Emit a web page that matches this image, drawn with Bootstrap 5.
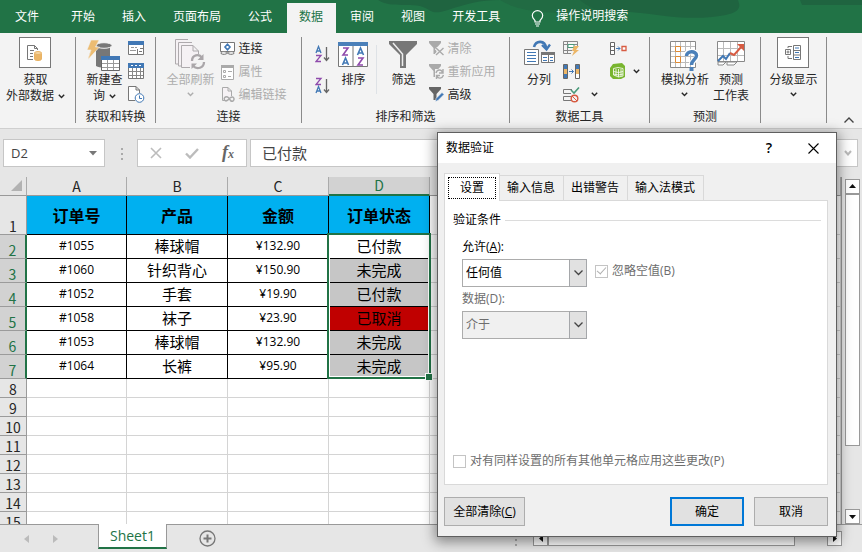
<!DOCTYPE html>
<html lang="zh-CN">
<head>
<meta charset="utf-8">
<meta name="viewport" content="width=device-width, initial-scale=1">
<title>数据验证</title>
<link rel="stylesheet" href="https://cdn.jsdelivr.net/npm/bootstrap@5.3.0/dist/css/bootstrap.min.css">
<style>
:root{--green:#217346;--ui:#e6e6e6;--line:#d4d4d4}
body{font:12px/16px "Open Sans","Noto Sans CJK SC",sans-serif;color:#262626;background:var(--ui)}
button{font:inherit;color:inherit;border:0;background:none;padding:0}
svg{display:block;flex:none}
.top-tabs{background:var(--green);height:34px;padding-left:3px;gap:2px}
.top-art{inset:0;width:100%;height:100%}
.top-tabs a{color:#fff;text-decoration:none;line-height:28px;padding:0 13px 0 12px;white-space:nowrap;height:30px}
.top-tabs a.file-tab{margin-right:5px}
.top-tabs a.on{background:#f3f3f3;color:var(--green)}
.top-tabs .tell{margin-left:16px;color:#fff;gap:12px;height:30px}
.ribbon{background:#f3f3f3;border-bottom:1px solid #cfcfcf;padding:4px 0 5px;height:96px}
.rgroup{border-right:1px solid #8a8a8a;white-space:nowrap}
.rgroup .body-row{height:73px;justify-content:center}
.cap{text-align:center;line-height:14px}
.big{display:flex;flex-direction:column;align-items:center}
.big .pic{height:35px;padding-top:2px;display:flex;align-items:flex-start}
.frame{width:32px;height:31px;border:1px solid #777;background:#fff;display:flex;align-items:center;justify-content:center;margin-top:-2px}
.off{color:#adadad}
.stack{display:flex;flex-direction:column}
.stack button{height:23px;display:flex;align-items:center;gap:3px}
.g1{width:76px}.g2{width:80px}.g3{width:146px}.g4{width:208px}.g5{width:140px}.g6{width:111px}.g7{width:66px}
.g2 .body-row,.g3 .body-row{gap:5px}
.fbar{height:48px;padding:10px 4px 0 3px}
.fbox{background:#fff;border:1px solid #c6c6c6;height:28px}
.fbox input{border:0;outline:0;background:none;color:#444;width:100%;min-width:0;padding:0}
.name-box{width:102px;padding:0 7px}
.name-box input{font-size:13px}
.tools{width:110px;margin-left:14px;padding:0 12px}
.fx{font:italic bold 18px/18px "Liberation Serif",serif;color:#666}
.fx small{font-size:12px}
.formula{margin-left:3px;padding:0 5px 0 11px}
.formula input{font-size:15px}
.dots{gap:3px;margin-top:9px}
.dots i{width:2px;height:2px;background:#aaa}
.work{min-height:0;overflow:hidden}
.sheet-wrap{overflow:hidden;min-width:0}
.grid{table-layout:fixed;width:100%;border-collapse:separate;border-spacing:0;background:#fff;border-right:1px solid #999}
.grid th,.grid td{padding:0;text-align:center;border-right:1px solid var(--line);border-bottom:1px solid var(--line)}
.grid th{background:var(--ui);font:14px/16px "Noto Sans CJK SC",sans-serif;color:#262626;border-color:#9b9b9b}
.grid thead th{height:19px;border-color:#ababab #ababab #999 #ababab}
.grid tbody th{vertical-align:bottom;height:19px}
.grid thead th.sel{background:#d2d2d2;color:var(--green);border-bottom:2px solid var(--green);line-height:15px}
.grid .tr-head th,.grid .tr-head td{height:39px}
.grid .tr-data th,.grid .tr-data td{height:24px}
.grid .tr-head td.hd{background:#00b0f0;color:#000;font:bold 16px/20px "Noto Sans CJK SC",sans-serif;border-color:#000}
.grid .tr-data td.c{border-color:#000;color:#000}
.grid .tr-data td.zh{font-size:15px;line-height:20px}
.grid .tr-data th{background:#d2d2d2;color:var(--green);border-right:2px solid var(--green)}
.grid .tr-data td.s{background:#c6c6c6}
.grid .tr-data td.bad{background:#c00000}
.pick{left:-2px;top:-2px;width:calc(100% + 4px);height:calc(600% + 8px);border:2px solid var(--green);box-shadow:inset 0 0 0 1px #fff;pointer-events:none}
.pick::after{content:"";position:absolute;right:-4px;bottom:-4px;width:6px;height:6px;background:var(--green);border:1px solid #fff;box-sizing:content-box}
.vbar{width:15px;margin:2px 2px 0 3px}
.vbar button,.hbar button{width:15px;height:15px;background:#fff;border:1px solid #999;display:flex;align-items:center;justify-content:center;flex:none}
.vthumb{height:252px;border:1px solid #999;background:#fff}
.foot{height:28px;border-top:1px solid #999;padding-right:20px}
.pager{padding:0 40px 0 24px}
.sheet-tab{background:#fff;color:var(--green);border:1px solid #999;border-top:0;border-bottom:2px solid var(--green);width:69px;height:25px;margin-top:-1px;font-size:14px;text-align:center;line-height:24px;text-decoration:none}
.hbar{width:309px;margin-top:6px}
.hthumb{width:247px;height:15px;border:1px solid #999;background:#fff}
.dlg{left:437px;top:132px;width:400px;border:1px solid #5f5f5f;background:#f0f0f0;color:#000;box-shadow:0 3px 12px 2px rgba(0,0,0,.42)}
.dlg-title{height:30px;background:#fff;padding:0 17px 0 8px}
.dlg-title h1{font-size:12px;line-height:16px;font-weight:400;margin:0}
.help{font-size:14px}
.dlg-main{padding:10px 8px 10px 6px}
.dtabs button{border:1px solid #d9d9d9;border-left:0;border-bottom:0;height:25px;background:#f0f0f0;padding:0 8px 0 7px}
.dtabs button.cur{height:28px;width:56px;background:#fff;border-left:1px solid #d9d9d9;padding:3px 3px 4px;margin-bottom:-1px;position:relative}
.dtabs .cur span{display:block;border:1px dotted #000;height:22px;line-height:19px}
.pane{background:#fff;border:1px solid #d9d9d9;padding:11px 6px 15px 8px;min-height:285px}
.rule{height:1px;background:#dcdcdc}
.opts{padding:11px 0 0 9px}
.combo{width:125px;height:28px}
.combo select{appearance:none;width:100%;height:100%;border:1px solid #acacac;border-radius:0;background:#fff;padding:0 20px 0 3px;font:inherit;color:#000;opacity:1}
.combo select:disabled{background:#f0f0f0;color:#6d6d6d}
.combo .drop{right:0;top:0;width:18px;height:28px;border:1px solid #a5a7aa;background:#e1e1e1;display:flex;align-items:center;justify-content:center;pointer-events:none}
.dim{color:#6d6d6d}
.tick{appearance:none;width:13px;height:13px;border:1px solid #c4c4c4;background:#fff;margin:0;flex:none;display:grid;place-items:center}
.tick:checked::after{content:"";width:9px;height:5px;border:solid #b0b0b0;border-width:0 0 1px 1px;transform:rotate(-48deg);margin-top:-3px}
.actions{gap:10px;padding-top:12px}
.dbtn{height:29px;width:74px;border:1px solid #adadad;background:#e1e1e1}
.dbtn.wide{width:81px}
.dbtn.main{border:2px solid #0078d7}
</style>
<script src="https://cdn.jsdelivr.net/npm/bootstrap@5.3.0/dist/js/bootstrap.bundle.min.js"></script>
</head>
<body class="d-flex flex-column vh-100 overflow-hidden position-relative">
<svg width="0" height="0" class="position-absolute"><defs>
<symbol id="chev" viewBox="0 0 7 5"><path d="M.8.8 3.5 3.5 6.2.8" fill="none" stroke="currentColor" stroke-width="1.4"/></symbol>
</defs></svg>

<nav class="top-tabs d-flex align-items-end position-relative">
  <svg class="top-art position-absolute" viewBox="0 0 862 34" preserveAspectRatio="xMinYMin slice"><path d="M378 0C390 8 408 3 420 6S430 16 448 10 480 0 500 0ZM580 0C582 12 604 10 630 12S680 20 712 17 740 6 738 0ZM800 0H862V5H802Z" fill="#1f6440"/><path d="M500 0H580C590 10 620 16 580 14S520 12 500 0Z" fill="#216b43"/></svg>
  <a href="#" class="file-tab position-relative">文件</a><a href="#" class="position-relative">开始</a><a href="#" class="position-relative">插入</a><a href="#" class="position-relative">页面布局</a><a href="#" class="position-relative">公式</a><a href="#" class="on position-relative">数据</a><a href="#" class="position-relative">审阅</a><a href="#" class="position-relative">视图</a><a href="#" class="position-relative">开发工具</a>
  <button class="tell d-flex align-items-center position-relative"><svg width="13" height="17" viewBox="0 0 13 17" fill="none" stroke="#fff" stroke-width="1.2"><path d="M4 12V10.500C3 9 1.300 8 1.300 5.500a5.200 4.800 0 0 1 10.400 0C11.700 8 10 9 9 10.500V12ZM4 14h5M5 16h3"/></svg><span class="pb-1">操作说明搜索</span></button>
</nav>

<section class="ribbon d-flex" aria-label="数据">
  <div class="rgroup g1"><div class="d-flex body-row pe-1">
    <button class="big"><span class="pic"><span class="frame"><svg width="16" height="18" viewBox="0 0 16 18" fill="none" stroke="#777"><path d="M6 15.500H.5v-14H7.500L10.500 4.500V6M7.500 1.500V4.500H10.500M3 6.500H7M3 9.500H6M3 12.500H6"/><path d="M7.500 9.500v5.500c0 2 7 2 7 0V9.500" fill="#ecb667" stroke="#e9b364"/><ellipse cx="11" cy="9" rx="3.500" ry="1.500" fill="#f6d6a3" stroke="#e9b364"/></svg></span></span><span>获取</span><span class="d-flex align-items-center gap-1">外部数据 <svg width="7" height="5"><use href="#chev"/></svg></span></button></div></div>

  <div class="rgroup g2"><div class="d-flex body-row">
    <button class="big"><span class="pic"><svg width="34" height="33" viewBox="0 0 34 33"><path d="M5 1H12L8 8H12L1 20 4 10H1Z" fill="#ecbc72"/><path d="M9 7V27C13 29 20 29 23 27V7Z" fill="#777"/><ellipse cx="17" cy="6.500" rx="8" ry="2.800" fill="#777" stroke="#f3f3f3"/><path d="M4 1H12L8.500 8H12.500L1 20.500 4 11H0Z" fill="#ecbc72" stroke="#f3f3f3" stroke-width=".6"/><path d="M14.500 17.500H32.500V31.500H14.500Z" fill="#fff" stroke="#666"/><path d="M14 17H33V21H14Z" fill="#4178b5"/><path d="M20.500 21V31M26.500 21V31M15 24.500H32M15 28.500H32" stroke="#999"/></svg></span><span>新建查</span><span class="d-flex align-items-center gap-1">询 <svg width="7" height="5"><use href="#chev"/></svg></span></button>
    <div class="stack"><button aria-label="显示查询"><svg width="16" height="15" viewBox="0 0 16 15"><path d="M.5.5H15.500V13.500H.5Z" fill="#fff" stroke="#777"/><path d="M0 0H16V4H0Z" fill="#4178b5"/><path d="M3 6.500H6M7 6.500H9M2 9.500H8" stroke="#999"/><path d="M9.500 8V13M12 7.500H15M11 10.500H14" stroke="#777"/></svg></button><button aria-label="从表格"><svg width="16" height="17" viewBox="0 0 16 17"><path d="M.5.5H15.500V15.500H.5Z" fill="#fff" stroke="#777"/><path d="M0 0H16V5H0Z" fill="#4178b5"/><path d="M3 2.500H5M7 2.500H9M11 2.500H13" stroke="#fff"/><path d="M4.500 5V15M8.500 5V15M12.500 5V15M1 8.500H15M1 12.500H15" stroke="#888"/></svg></button><button aria-label="最近使用的源"><svg width="17" height="17" viewBox="0 0 17 17" fill="none"><path d="M7 14.500H.5V.5H8L11.500 4V7M8 .5V4H11.500" fill="#fff" stroke="#777"/><circle cx="11.500" cy="12" r="4.300" fill="#fff" stroke="#4178b5"/><path d="M11.500 9.500V12.500H14" stroke="#4178b5"/></svg></button></div>
  </div><div class="cap">获取和转换</div></div>

  <div class="rgroup g3"><div class="d-flex body-row pe-1">
    <button class="big off" disabled><span class="pic"><svg width="32" height="33" viewBox="0 0 32 33" fill="#f5f1f4" stroke="#aeaaad"><path d="M4 25H1.500V.5H14M8 27H4.500V3.500H18"/><path d="M16 28.500H7.500V6.500H19L24.500 12V15M19 6.500V12H24.500"/><g fill="none" stroke="#aaa6a9" stroke-width="2.300"><path d="M18 22C18 16 25 14 28 19M30 23C30 29 23 31 19 27"/></g><path d="M29.500 15V21H23.500ZM17.500 30V24.500H23Z" fill="#aaa6a9" stroke="none"/></svg></span><span>全部刷新</span><svg class="mt-1" width="7" height="5"><use href="#chev"/></svg></button>
    <div class="stack"><button><svg width="16" height="13" viewBox="0 0 16 13" fill="#fff" stroke="#777"><path d="M.5.5H14.500V9.500H.5Z"/><path d="M7.500 2.300 10 5 7.500 7.700 5 5Z" stroke="#4178b5" stroke-width="1.600"/><path d="M1 11.500C1 9 5 9 7.500 11 10 9 14 9 14 11.500 12 13 9 12.500 7.500 11 6 12.500 3 13 1 11.500Z" fill="#eee"/></svg><span>连接</span></button><button class="off" disabled><svg width="16" height="16" viewBox="0 0 16 16" fill="#fff" stroke="#aaa"><path d="M1.500 1.500H13.500V15.500H1.500Z"/><path d="M1 2.500H14" stroke-width="3"/><path d="M3.500 6.500H5.500V8.500H3.500ZM3.500 11.500H5.500V13.500H3.500ZM8 7.500H12M8 12.500H11"/></svg><span>属性</span></button><button class="off" disabled><svg width="16" height="17" viewBox="0 0 16 17" fill="#f6f2f5" stroke="#aaa"><path d="M5 14.500H2.500V1.500H8L11.500 5V10M8 1.500V5H11.500"/><path d="M9 12C5 9 3 13 5 14.500 7 16 9 13 10 12 14 9 15 14 13 15 11 16 10 14 9 12Z" fill="none" stroke-width="1.500"/></svg><span>编辑链接</span></button></div>
  </div><div class="cap">连接</div></div>

  <div class="rgroup g4"><div class="d-flex body-row">
    <div class="d-flex flex-column me-2 pt-2" style="gap:14px"><button aria-label="升序"><svg width="15" height="18" viewBox="0 0 15 18" fill="none" stroke-width="1.300"><path d="M1 8 3.500 1.500 6 8M2 6H5" stroke="#4178b5"/><path d="M1 10.500H6L1 16.500H6" stroke="#8f4bac"/><path d="M11.500 2V15M9 12.500 11.500 15.500 14 12.500" stroke="#666"/></svg></button><button aria-label="降序"><svg width="15" height="18" viewBox="0 0 15 18" fill="none" stroke-width="1.300"><path d="M1 1.500H6L1 7.500H6" stroke="#8f4bac"/><path d="M1 16 3.500 9.500 6 16M2 14H5" stroke="#4178b5"/><path d="M11.500 2V15M9 12.500 11.500 15.500 14 12.500" stroke="#666"/></svg></button></div>
    <button class="big"><span class="pic"><svg width="30" height="29" viewBox="0 0 30 29" fill="none"><path d="M.5 3.500H29.500V27.500H.5ZM15 6V28" fill="#fff" stroke="#777"/><path d="M0 3H30V7H0Z" fill="#4b80b9"/><g stroke-width="1.600"><path d="M5 9H10L5 16H10M20 19H25L20 26H25" stroke="#8f4bac"/><path d="M4.500 26 7.500 19 10.500 26M5.500 24H9.500M19.500 16 22.500 9 25.500 16M20.500 14H24.500" stroke="#4178b5"/></g></svg></span><span>排序</span></button>
    <div class="border-start mx-2 mt-2 mb-3 ms-2 ps-1"></div>
    <button class="big me-1"><span class="pic"><svg width="28" height="29" viewBox="0 0 28 29"><path d="M0 2H28V5L17 16V29H11V16L0 5Z" fill="#777"/><path d="M4 4 13.500 15V27" fill="none" stroke="#eee" stroke-width="1.500"/></svg></span><span>筛选</span></button>
    <div class="stack ms-2"><button class="off" disabled><svg width="15" height="15" viewBox="0 0 15 15"><path d="M0 0H12V2L7.500 7V13H4.500V7L0 2Z" fill="#aaa"/><path d="M7 7 14.500 14M14.500 7 7 14" stroke="#f3f3f3" stroke-width="3.500"/><path d="M7 7 14.500 14M14.500 7 7 14" stroke="#aaa" stroke-width="1.400"/></svg><span>清除</span></button><button class="off" disabled><svg width="15" height="15" viewBox="0 0 15 15"><path d="M0 0H12V2L7.500 7V13H4.500V7L0 2Z" fill="#aaa"/><path d="M6 5H15V15H6Z" fill="#f3f3f3"/><path d="M7 9C8 5 13 5 13.500 9M14.500 11C13 15 9 15 8 12M14 5V9H10M7.500 15V11.500H11" fill="none" stroke="#aaa" stroke-width="1.400"/></svg><span>重新应用</span></button><button><svg width="15" height="15" viewBox="0 0 15 15"><path d="M0 0H12V2L7.500 7V13H4.500V7L0 2Z" fill="#666"/><path d="M6.500 14.500 7 11.500 13 5.500 15 7.500 9 13.500Z" fill="#4178b5" stroke="#f3f3f3" stroke-width=".6"/></svg><span>高级</span></button></div>
  </div><div class="cap">排序和筛选</div></div>

  <div class="rgroup g5"><div class="d-flex body-row ps-1">
    <button class="big"><span class="pic"><svg width="31" height="28" viewBox="0 0 31 28" fill="none"><path d="M10 8C12 1 21 1 22 9" stroke="#4178b5" stroke-width="2.600"/><path d="M18 6 22.500 10.500 26 5.500" stroke="#4178b5" stroke-width="2.300"/><path d="M.5 10.500H14.500V25.500H.5Z" fill="#fff" stroke="#777"/><path d="M3 13.500H12M3 16.500H12M3 19.500H12M3 22.500H12" stroke="#4178b5"/><path d="M17.500 13.500H30.500V23.500H17.500Z" fill="#fff" stroke="#777"/><path d="M17 14.500H31" stroke="#777" stroke-width="3"/><path d="M24.500 15V23" stroke="#777"/><path d="M19 18.500H23M19 21.500H23M26 18.500H29M26 21.500H29" stroke="#4178b5"/></svg></span><span>分列</span></button>
    <div class="stack ms-2"><button aria-label="快速填充"><svg width="17" height="15" viewBox="0 0 17 15" fill="none" stroke="#888"><path d="M8 12.500H.5V.5H14.500V5M0 3.500H14M0 9.500H9M4.500 0V13"/><path d="M5 3.500H11V6.500H5Z" stroke="#4a9b7b" fill="#fff"/><path d="M11 5H16L13 9H16L9 15 11 10H9Z" fill="#ecb667" stroke="none"/></svg></button><button aria-label="删除重复值"><svg width="17" height="15" viewBox="0 0 17 15"><path d="M.5.5H4.500V14.500H.5ZM12.500.5H16.500V14.500H12.500Z" fill="#ecb667" stroke="#666"/><path d="M1 1H4V5H1ZM1 10H4V14H1ZM13 1H16V5H13Z" fill="#4178b5"/><path d="M13 10H16V14H13Z" fill="#fff"/><path d="M6 7.500H10.500M8.500 5.500 10.500 7.500 8.500 9.500" fill="none" stroke="#4178b5"/></svg></button><button aria-label="数据验证"><svg width="17" height="16" viewBox="0 0 17 16" fill="none"><path d="M9 2.500H.5V6.500H8M8 9.500H.5V13.500H8" stroke="#777"/><path d="M8 3 11 6 16 .5" stroke="#4a9b7b" stroke-width="1.600"/><circle cx="11.500" cy="11.500" r="3.300" stroke="#d75b42" stroke-width="1.400"/><path d="M9 9 14 14" stroke="#d75b42"/></svg><svg class="ms-2" width="7" height="5"><use href="#chev"/></svg></button></div>
    <div class="stack ms-2 ps-1"><button aria-label="合并计算"><svg width="17" height="13" viewBox="0 0 17 13" fill="#fff" stroke="#666"><path d="M.5.5H4.500V12.500H.5ZM0 4.500H4M0 8.500H4"/><path d="M6 6.500H10M8 4.500 10 6.500 8 8.500" fill="none" stroke="#4178b5"/><path d="M12 4.500H16V8.500H12Z" stroke="#d75b42" stroke-width="1.300"/></svg></button><button aria-label="数据模型"><svg width="16" height="17" viewBox="0 0 16 17"><path d="M3 1 12 0 15 3V14L11 16H3L0 13V5Z" fill="#79b52f"/><path d="M3.500 5.500 8 4.500 13 5.500V13L8.500 14 3.500 12ZM3.500 8.500 8.500 9.500 13 8.500M8.500 6V14M6 6V13M11 6V13M3.500 11 8.500 12 13 11" fill="none" stroke="#fff" stroke-width=".8"/></svg><svg class="ms-1" width="7" height="5"><use href="#chev"/></svg></button></div>
  </div><div class="cap">数据工具</div></div>

  <div class="rgroup g6"><div class="d-flex body-row">
    <button class="big"><span class="pic pt-1"><svg width="30" height="31" viewBox="0 0 30 31" fill="none"><path d="M.5.5H25.500V26.500H.5Z" fill="#fff" stroke="#888"/><path d="M5.500 1V26M10.500 1V26M15.500 1V26M20.500 1V26M1 5.500H25M1 10.500H25M1 15.500H25M1 21.500H25" stroke="#bbb"/><path d="M5.500 5.500H10.500V10.500H5.500ZM5.500 15.500H10.500V21.500H5.500Z" fill="#fff" stroke="#df8a33"/><path d="M16 15C16 9 27 9 27 15 27 19 21.500 19 21.500 24" stroke="#fff" stroke-width="5.500"/><path d="M16.500 15C16.500 9.500 26.500 9.500 26.500 14.500 26.500 18.500 21.500 18.500 21.500 24" stroke="#4b80b9" stroke-width="3.500"/><path d="M19.500 26H23.500V30H19.500Z" fill="#4b80b9"/></svg></span><span>模拟分析</span><svg class="mt-1" width="7" height="5"><use href="#chev"/></svg></button>
    <button class="big ms-1"><span class="pic pt-1"><svg width="29" height="27" viewBox="0 0 29 27" fill="none"><path d="M.5.5H27.500V20.500H.5Z" fill="#fff" stroke="#888"/><path d="M6.500 1V20M13.500 1V20M20.500 1V20M1 7.500H27M1 14.500H27" stroke="#bbb"/><path d="M1 21H9L6 24H1ZM10 21H20L17 24H10Z" fill="#fff" stroke="#888"/><path d="M1 20 6 15 9 18 13 12" stroke="#4178b5" stroke-width="2"/><path d="M13 12 17 14 25 5" stroke="#d75b42" stroke-width="2"/><path d="M20 3H27V10Z" fill="#d75b42"/></svg></span><span>预测</span><span>工作表</span></button>
  </div><div class="cap">预测</div></div>

  <div class="rgroup g7"><div class="d-flex body-row"><button class="big"><span class="pic"><span class="frame"><svg width="17" height="15" viewBox="0 0 17 15" fill="none" stroke="#777"><path d="M3 4.500H.5V9.500H5.500V4.500H3M1.500 7H4.500M3 5.500V8.500M3 3V1.500H7M3 11V13.500H7M8.500.5H15.500V14.500H8.500ZM8.500 5.500H15M8.500 10H15"/><path d="M10 3H14M10 7.500H14M10 12.500H14" stroke="#4178b5"/></svg></span></span><span>分级显示</span><svg class="mt-1" width="7" height="5"><use href="#chev"/></svg></button></div></div>
  <button class="ms-auto align-self-end pe-2" aria-label="折叠功能区"><svg width="10" height="6" viewBox="0 0 10 6"><path d="M.5 5.500 5 1 9.500 5.500" fill="none" stroke="#444" stroke-width="1.400"/></svg></button>
</section>

<div class="fbar d-flex align-items-start">
  <div class="fbox name-box d-flex align-items-center"><input aria-label="名称框" value="D2"><svg width="8" height="5"><path d="M0 0H8L4 4.500Z" fill="#777"/></svg></div>
  <div class="dots d-flex flex-column ms-3 ps-0"><i></i><i></i><i></i></div>
  <div class="fbox tools d-flex align-items-center justify-content-between flex-shrink-0"><button aria-label="取消"><svg width="12" height="12"><path d="M1 1 11 11M11 1 1 11" stroke="#bcbcbc" stroke-width="1.600"/></svg></button><button aria-label="输入"><svg width="14" height="11"><path d="M1 5.500 5 9.500 13 1" fill="none" stroke="#bcbcbc" stroke-width="2.400"/></svg></button><button aria-label="插入函数" class="fx">f<small>x</small></button></div>
  <div class="fbox formula flex-fill d-flex align-items-center"><input aria-label="编辑栏" value="已付款"><svg width="8" height="6"><path d="M1 1 4 4.500 7 1" fill="none" stroke="#bbb" stroke-width="2"/></svg></div>
</div>

<main class="work d-flex flex-fill">
  <div class="sheet-wrap flex-fill">
  <table class="grid">
    <colgroup><col style="width:27px"><col style="width:100px"><col style="width:101px"><col style="width:101px"><col style="width:101px"><col></colgroup>
    <thead><tr><th><svg class="ms-auto me-1" width="11" height="11"><path d="M11 0V11H0Z" fill="#b2b2b2"/></svg></th><th>A</th><th>B</th><th>C</th><th class="sel">D</th><th></th></tr></thead>
    <tbody>
    <tr class="tr-head"><th>1</th><td class="hd">订单号</td><td class="hd">产品</td><td class="hd">金额</td><td class="hd">订单状态</td><td></td></tr>
    <tr class="tr-data"><th>2</th><td class="c">#1055</td><td class="c zh">棒球帽</td><td class="c">¥132.90</td><td class="c zh position-relative">已付款<span class="pick position-absolute"></span></td><td></td></tr>
    <tr class="tr-data"><th>3</th><td class="c">#1060</td><td class="c zh">针织背心</td><td class="c">¥150.90</td><td class="c zh s">未完成</td><td></td></tr>
    <tr class="tr-data"><th>4</th><td class="c">#1052</td><td class="c zh">手套</td><td class="c">¥19.90</td><td class="c zh s">已付款</td><td></td></tr>
    <tr class="tr-data"><th>5</th><td class="c">#1058</td><td class="c zh">袜子</td><td class="c">¥23.90</td><td class="c zh bad">已取消</td><td></td></tr>
    <tr class="tr-data"><th>6</th><td class="c">#1053</td><td class="c zh">棒球帽</td><td class="c">¥132.90</td><td class="c zh s">未完成</td><td></td></tr>
    <tr class="tr-data"><th>7</th><td class="c">#1064</td><td class="c zh">长裤</td><td class="c">¥95.90</td><td class="c zh s">未完成</td><td></td></tr>
    <tr><th>8</th><td></td><td></td><td></td><td></td><td></td></tr>
    <tr><th>9</th><td></td><td></td><td></td><td></td><td></td></tr>
    <tr><th>10</th><td></td><td></td><td></td><td></td><td></td></tr>
    <tr><th>11</th><td></td><td></td><td></td><td></td><td></td></tr>
    <tr><th>12</th><td></td><td></td><td></td><td></td><td></td></tr>
    <tr><th>13</th><td></td><td></td><td></td><td></td><td></td></tr>
    <tr><th>14</th><td></td><td></td><td></td><td></td><td></td></tr>
    <tr><th>15</th><td></td><td></td><td></td><td></td><td></td></tr>
    </tbody>
  </table>
  </div>
  <div class="vbar d-flex flex-column"><button aria-label="向上"><svg width="7" height="4"><path d="M0 4 3.500 0 7 4Z" fill="#111"/></svg></button><div class="vthumb"></div><button class="mt-auto" aria-label="向下"><svg width="7" height="4"><path d="M0 0H7L3.500 4Z" fill="#111"/></svg></button></div>
</main>

<footer class="foot d-flex align-items-start">
  <div class="pager d-flex gap-4 align-self-center"><svg width="5" height="8"><path d="M5 0V8L0 4Z" fill="#bbb"/></svg><svg width="5" height="8"><path d="M0 0V8L5 4Z" fill="#bbb"/></svg></div>
  <a href="#" class="sheet-tab">Sheet1</a>
  <button class="ms-4 ps-2 align-self-center" aria-label="新工作表"><svg width="17" height="17" fill="none" stroke="#777"><circle cx="8.500" cy="8.500" r="7.500" stroke-width="1.300"/><path d="M8.500 4.500V12.500M4.500 8.500H12.500" stroke-width="2"/></svg></button>
  <div class="dots d-flex flex-column ms-auto me-3"><i></i><i></i><i></i></div>
  <div class="hbar d-flex"><button aria-label="向左"><svg width="4" height="7"><path d="M4 0V7L0 3.500Z" fill="#111"/></svg></button><div class="hthumb"></div><button class="ms-auto" aria-label="向右"><svg width="4" height="7"><path d="M0 0V7L4 3.500Z" fill="#111"/></svg></button></div>
</footer>

<section class="dlg position-absolute" role="dialog" aria-labelledby="dlgt">
  <div class="dlg-title d-flex align-items-center"><h1 id="dlgt" class="me-auto">数据验证</h1><button class="help fw-semibold me-4 pe-2" aria-label="帮助">?</button><button aria-label="关闭"><svg class="ms-1" width="11" height="11"><path d="M.5.5 10.500 10.500M10.500.5.5 10.500" stroke="#000" stroke-width="1.100"/></svg></button></div>
  <div class="dlg-main">
    <div class="dtabs d-flex align-items-end" role="tablist"><button class="cur" role="tab"><span>设置</span></button><button role="tab">输入信息</button><button role="tab">出错警告</button><button role="tab">输入法模式</button></div>
    <div class="pane d-flex flex-column">
      <div class="d-flex align-items-center gap-1"><span>验证条件</span><div class="rule flex-fill"></div></div>
      <div class="opts">
        <label for="allow" class="d-block mb-1">允许(<u>A</u>):</label>
        <div class="d-flex align-items-start"><div class="combo position-relative"><select id="allow"><option>任何值</option></select><span class="drop position-absolute"><svg width="9" height="6"><path d="M.5.5 4.500 4.500 8.500.5" fill="none" stroke="#444" stroke-width="1.300"/></svg></span></div>
        <label class="dim d-flex align-items-center ms-2 mt-1 gap-1"><input class="tick" type="checkbox" checked disabled>忽略空值(B)</label></div>
        <label for="cmp" class="d-block dim mt-1 mb-1">数据(D):</label>
        <div class="combo position-relative"><select id="cmp" disabled><option>介于</option></select><span class="drop position-absolute"><svg width="9" height="6"><path d="M.5.5 4.500 4.500 8.500.5" fill="none" stroke="#444" stroke-width="1.300"/></svg></span></div>
      </div>
      <label class="dim d-flex align-items-center gap-1 mt-auto"><input class="tick" type="checkbox" disabled>对有同样设置的所有其他单元格应用这些更改(P)</label>
    </div>
    <div class="actions d-flex"><button class="dbtn wide me-auto">全部清除(<u>C</u>)</button><button class="dbtn main">确定</button><button class="dbtn">取消</button></div>
  </div>
</section>
</body>
</html>
